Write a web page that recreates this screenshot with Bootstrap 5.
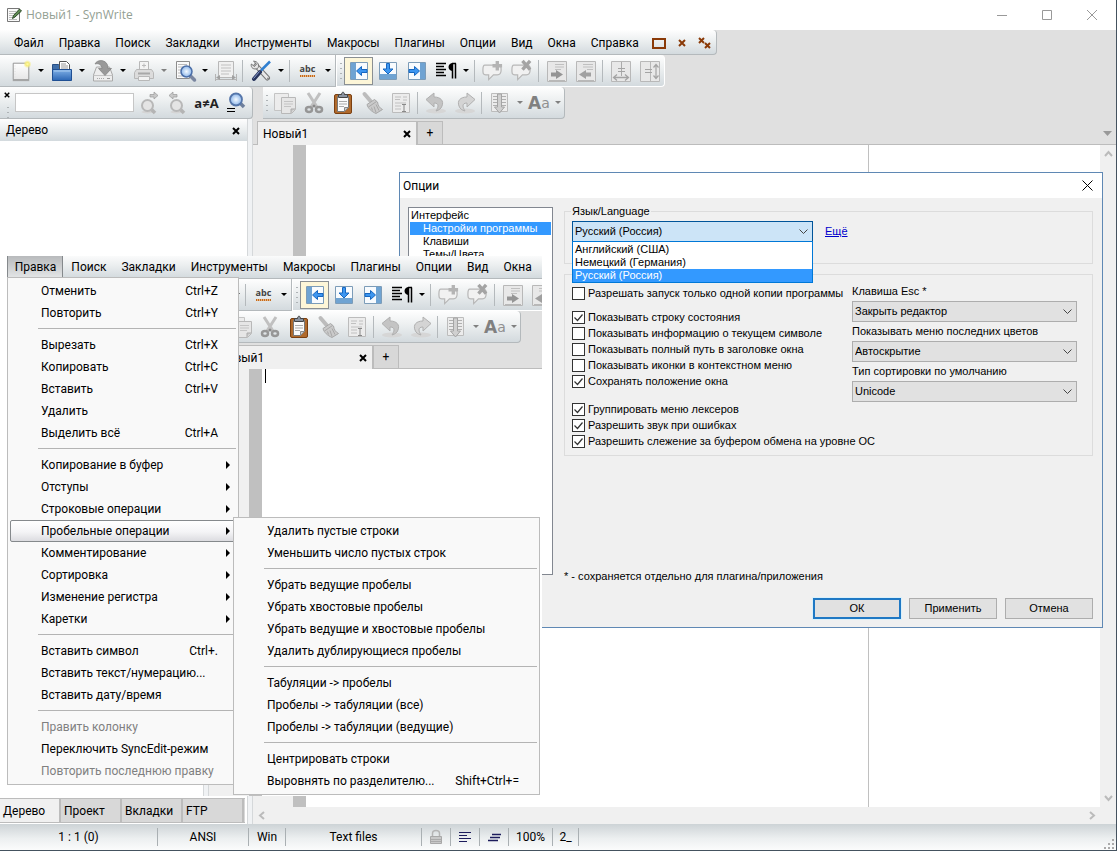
<!DOCTYPE html>
<html lang="ru">
<head>
<meta charset="utf-8">
<meta name="viewport" content="width=device-width, initial-scale=1">
<title>Новый1 - SynWrite</title>
<link href="https://cdn.jsdelivr.net/npm/bootstrap@5.3.0/dist/css/bootstrap.min.css" rel="stylesheet">
<style>
  :root {
    --ui: Roboto, "Noto Sans", sans-serif;
    --dlg: "Liberation Sans", Arial, sans-serif;
    --bar: linear-gradient(#fefefe, #eceff0 45%, #d3dade);
    --edge: #b4b9bc;
  }
  body { font: 12px/16px var(--ui); color: #000; background: #fff; overflow: hidden; }
  button, input, select { font: inherit; color: inherit; }
  button { border: 0; background: none; padding: 0; }
  .app { min-height: 100vh; border-right: 1px solid #44525f; border-bottom: 1px solid #44525f; }
  .titlebar { height: 30px; padding: 0 2px 0 6px; color: #93a093; }
  .titlebar span { font-family: "Open Sans", sans-serif; }
  .titlebar button { width: 45px; height: 28px; }
  .work { background: #e0e0e0; }

  .menubar { height: 25px; width: 717px; padding-left: 6px; }
  .barbox { background: var(--bar); border-right: 1px solid var(--edge); border-bottom: 1px solid var(--edge); border-radius: 0 4px 4px 0; }
  .menubar button { height: 22px; padding: 0 6px 0 7px; border: 1px solid transparent; border-bottom: 0; }
  .menubar .mdi { padding: 0 5px; color: #8a3a08; }
  .toolrow { height: 32px; }
  .tools-main { width: 336px; padding-left: 6px; border-radius: 0; }
  .tb { width: 29px; height: 28px; display: flex; align-items: center; justify-content: center; flex: none; }
  .tb svg, .titlebar svg { display: block; }
  .tb.on { border: 1px solid #8a8f93; background: #fdf6d8; }
  .dd { width: 12px; height: 28px; flex: none; display: flex; align-items: center; justify-content: center; }
  .dd::before { content: ""; border: 3px solid transparent; border-top-color: #000; border-bottom: 0; }
  .dd.off::before { border-top-color: #808080; }
  .vs { width: 6px; height: 22px; flex: none; background: linear-gradient(#b4b9bc, #b4b9bc) 2px 0 / 1px 100% no-repeat; }
  .grip { width: 7px; height: 20px; flex: none; background: radial-gradient(circle, #aeb3b6 1px, transparent 1px) 0 0 / 4px 5px repeat-y; background-position: 2px 0; }
  .findbar { width: 253px; margin-right: 10px; }
  .findbar .shut { width: 14px; height: 28px; }
  .findbar input { width: 119px; height: 19px; border: 1px solid #c6c6c6; background: #fff; margin-left: 1px; }
  .abc { font: 700 9px/10px "Open Sans", sans-serif; color: #444; }
  .abc span { padding-bottom: 3px; background: repeating-linear-gradient(90deg, #c46a1c 0 1px, #e8b888 1px 2px) 0 100% / 100% 2px no-repeat; }
  .cmp { font: 700 13px/16px "Open Sans", sans-serif; color: #222; }
  .aa { width: 26px; color: #909090; font: 14px/20px "DejaVu Sans", sans-serif; }
  .aa b { font-size: 17px; color: #808080; }

  .tree { width: 247px; background: #fff; }
  .tree-head { height: 22px; background: var(--bar); padding: 0 7px 0 6px; }
  .tree-tabs { height: 25px; border-top: 1px solid #bcbcbc; border-bottom: 1px solid #bcbcbc; background: #d8d8d8; margin: 0 2px 1px 0; }
  .tree-tabs button { width: 61px; text-align: left; padding-left: 3px; border-right: 2px solid #bcbcbc; background: #d8d8d8; }
  .tree-tabs .active { background: #f0f0f0; }
  .split { width: 6px; background: #f0f2f4; border-left: 1px solid #d5d8da; border-right: 1px solid #d5d8da; }
  .filetabs { height: 26px; padding: 2px 0 0 4px; border-bottom: 1px solid #bcbcbc; }
  .filetab { width: 161px; height: 24px; margin-bottom: -1px; padding: 0 5px; background: #f0f0f0; border: 1px solid #bcbcbc; border-bottom: 0; border-right-width: 2px; }
  .newtab { width: 25px; background: #d8d8d8; border: 1px solid #bcbcbc; border-left: 0; border-bottom: 0; }
  .page { background: #fff; }
  .gutter { width: 40px; background: #f0f0f0; }
  .fold { width: 13px; background: #c0c0c0; }
  .margin-line { width: 232px; border-left: 1px solid #c0c0c0; }
  .vscroll { width: 16px; padding: 5px 0; background: #f0f0f0; }
  .hscroll { height: 17px; padding: 0 20px 0 5px; background: #f0f0f0; }
  .cursor-mark { display: none; width: 1px; height: 14px; margin-left: 3px; background: #000; }

  .status { height: 26px; background: linear-gradient(#cdd3d6, #eceff0 55%, #fbfcfc); }
  .status span { height: 18px; border-right: 1px solid #aab0b3; display: flex; align-items: center; justify-content: center; }
  .w-pos { width: 158px; } .w-enc { width: 91px; } .w-eol { width: 37px; } .w-lex { width: 136px; }
  .w-ico { width: 29px; } .w-zoom { width: 44px; } .w-tab { width: 26px; }

  .dialog { left: 399px; right: 14px; top: 172px; background: #f0f0f0; border: 1px solid #5f88b4; font: 11px/13px var(--dlg); }
  .dialog header { height: 25px; background: #fff; padding: 0 9px 0 3px; }
  .dialog header h1 { font: 12px/16px var(--ui); margin: 0; }
  .dlg-body { padding: 9px 9px 8px 8px; }
  .topics { flex: none; width: 145px; height: 368px; background: #fff; border: 1px solid #828790; padding: 1px; margin: 0 11px 8px 0; }
  .topics li { padding-left: 1px; height: 13px; white-space: nowrap; }
  .topics .sub { padding-left: 13px; }
  .topics .sel, .options .sel { background: #3399ff; color: #fff; }
  .grp { border: 1px solid #dcdcdc; position: relative; }
  .lang { margin-top: 4px; height: 53px; padding: 9px 7px 0; }
  .lang legend { position: absolute; top: -7px; left: 6px; width: auto; padding: 0 1px; font-size: 11px; line-height: 13px; background: #f0f0f0; margin: 0; }
  .combo { appearance: none; width: 100%; height: 21px; padding: 0 2px; border: 1px solid #adadad; border-radius: 0; background: #e1e1e1 url("data:image/svg+xml,%3Csvg xmlns='http://www.w3.org/2000/svg' width='9' height='6'%3E%3Cpath d='M.5.5l4 4 4-4' fill='none' stroke='%23444'/%3E%3C/svg%3E") right 4px center no-repeat; }
  .lang-pick { width: 241px; margin-right: 12px; }
  .lang-pick .combo { background-color: #cce4f7; border-color: #005499; }
  .options { left: 0; top: 20px; width: 241px; padding-top: 1px; background: #fff; border: 1px solid #0078d7; z-index: 2; }
  .options li { padding-left: 2px; height: 13px; }
  .other { margin-top: 10px; height: 182px; padding: 7px 15px 0 7px; }
  .checks { padding-top: 3px; width: 280px; }
  .chk { height: 16px; display: flex; align-items: center; gap: 3px; white-space: nowrap; }
  .chk.apart { margin-top: 12px; }
  .chk input { appearance: none; width: 13px; height: 13px; border: 1px solid #333; background: #fff; margin: 0; flex: none; }
  .chk input:checked { background: #fff url("data:image/svg+xml,%3Csvg xmlns='http://www.w3.org/2000/svg' width='11' height='11'%3E%3Cpath d='M1.500 5.500l3 3 5-6' fill='none' stroke='%23333' stroke-width='1.200'/%3E%3C/svg%3E") center no-repeat; }
  .side { width: 225px; }
  .side label { display: block; height: 19px; line-height: 19px; }
  .side .combo { display: block; }
  .more-link { color: #00c; }
  .dlg-foot { padding-top: 15px; }
  .push { width: 88px; height: 21px; background: #e1e1e1; border: 1px solid #adadad; }
  .push.main { border: 2px solid #1f78c4; box-shadow: 0 0 0 1px #d9f0fb; }

  .snap { left: 7px; top: 256px; width: 535px; height: 540px; overflow: hidden; background: #fff; }
  .snap .work { width: 100vw; height: 600px; margin: -2px 0 0 -51px; }
  .snap .cursor-mark { display: block; }
  .snap .is-hidden-here { visibility: hidden; }
  .snap .is-open { background: linear-gradient(#b6b8ba, #e4e6e7); border-color: #85898c; border-radius: 2px 2px 0 0; height: 24px; }

  .dropdown-menu.win { --bs-dropdown-border-radius: 0; font-size: 12px; color: #000; padding: 2px; background: #f9f9f9; border: 1px solid #bcbcbc; margin: 0; min-width: 0; }
  .edit-menu { left: 7px; top: 277px; width: 232px; }
  .space-menu { left: 233px; top: 517px; width: 307px; }
  .win .dropdown-item { height: 22px; padding: 0 17px 0 30px; border: 1px solid transparent; line-height: 20px; color: #000; display: flex; justify-content: space-between; position: relative; }
  .win .dropdown-item:disabled { color: #808080; }
  .win .dropdown-divider { height: 1px; margin: 4px 0 5px 28px; border-top: 1px solid #b4b4b4; opacity: 1; }
  .win .hot { background: linear-gradient(#fff, #f4f4f6 55%, #dcdce0); border-color: #85898c; border-radius: 2px; }
  .win .more::after { content: ""; position: absolute; right: 5px; top: 6px; border: 4px solid transparent; border-left-color: #000; border-right: 0; }
</style>
</head>
<body>

<svg width="0" height="0" class="position-absolute" aria-hidden="true">
  <defs>
    <linearGradient id="gb" x2="0" y2="1"><stop stop-color="#7fb0e6"/><stop offset="1" stop-color="#2c66b4"/></linearGradient>
    <radialGradient id="gl"><stop stop-color="#f4faff"/><stop offset="1" stop-color="#8cb6ea"/></radialGradient>
    <radialGradient id="gy"><stop stop-color="#fffbb0"/><stop offset=".4" stop-color="#f6ec7a"/><stop offset="1" stop-color="#f6ec7a" stop-opacity="0"/></radialGradient>
    <linearGradient id="gp" x2="0" y2="1"><stop stop-color="#fff"/><stop offset="1" stop-color="#e6e6e6"/></linearGradient>
  </defs>
  <symbol id="i-new" viewBox="0 0 24 24"><path d="M3.500 3.500h17v18h-17z" fill="url(#gp)" stroke="#8d8d8d"/><path d="M3 22.500h18" stroke="#9a9a9a"/><path d="M5.500 6v14" stroke="#ddd" stroke-dasharray="1 2"/><circle cx="19" cy="4.500" r="4.500" fill="url(#gy)"/></symbol>
  <symbol id="i-open" viewBox="0 0 24 24"><path d="M2.500 21V5.500h6l2 2h2V21z" fill="#3f6ea8" stroke="#274f85"/><path d="M9.500 2.500h7l3 3V14h-10z" fill="#fff" stroke="#555"/><path d="M11 5h5M11 7h7M11 9h7" stroke="#999"/><path d="M2.500 21.500V10.500h19v11z" fill="url(#gb)" stroke="#1f4f93"/><path d="M4 12h16" stroke="#a9cbf0"/></symbol>
  <symbol id="i-save" viewBox="0 0 24 24"><path d="M5.500 8h13l3 8v6h-19v-6z" fill="#ededed" stroke="#a9a9a9"/><path d="M2.500 16.500h19" stroke="#c4c4c4"/><path d="M6 19.500h8" stroke="#aaa" stroke-dasharray="1 1"/><path d="M16 19.500h3" stroke="#999"/><path d="M4 5c2-5 12-5 13 3v1.500h3.500L14 16.500 7.500 9.500H11C11 5.500 7 4 4 5z" fill="#999" stroke="#808080" stroke-width=".7"/></symbol>
  <symbol id="i-print" viewBox="0 0 24 24"><path d="M7.500 11V2.500h9V11" fill="#f4f4f4" stroke="#b8b8b8"/><path d="M10 6.500h4M12 4.500v4" stroke="#bbb"/><path d="M4.500 10.500h15l2 3v6h-19v-6z" fill="#dcdcdc" stroke="#b8b8b8"/><path d="M6 14.500h12" stroke="#a8a8a8" stroke-width="2"/><path d="M6.500 17.500h11v4h-11z" fill="#f2f2f2" stroke="#b8b8b8"/></symbol>
  <symbol id="i-preview" viewBox="0 0 24 24"><path d="M3.500 2.500h13v17h-13z" fill="#fafafa" stroke="#8d8d8d"/><path d="M5 5.500h9M5 8h5M5 11h3M5 14h3M5 17h6" stroke="#bbb"/><path d="M17.500 17l4 4" stroke="#7a86a0" stroke-width="3.500" stroke-linecap="round"/><circle cx="13.500" cy="12.500" r="5.500" fill="url(#gl)" stroke="#4a6ea8" stroke-width="1.500"/></symbol>
  <symbol id="i-fit" viewBox="0 0 24 24"><path d="M4.500 2.500h15v16h-15z" fill="#f0f0f0" stroke="#b8b8b8"/><path d="M7 6h10M7 9h10M7 12h10M7 15h8" stroke="#c0c0c0"/><path d="M1.500 15v7M22.500 15v7M2 20.500h20" stroke="#b4b4b4"/><path d="M2 18.500l4-2.500v5zM22 18.500l-4-2.500v5z" fill="#a0a0a0"/></symbol>
  <symbol id="i-tools" viewBox="0 0 24 24"><path d="M7 6.500L18.500 19" stroke="#777" stroke-width="5" stroke-linecap="round"/><path d="M7 6.500L18.500 19" stroke="#e8e8e8" stroke-width="3" stroke-linecap="round"/><path d="M4.500 2.200L7.500 5 5.500 7.500 2.300 5C1.500 9 5 11 8.500 9.500 11 7 9 2 4.500 2.200z" fill="#e4e4e4" stroke="#777"/><circle cx="19" cy="19.500" r="1" fill="#888"/><path d="M21 2.500L12 11.500" stroke="#2f7fd0" stroke-width="2.500"/><path d="M11 13l-6 7" stroke="#27345c" stroke-width="4" stroke-linecap="round"/><path d="M10.500 12.500l-6 7" stroke="#8c9ed0"/></symbol>
  <symbol id="i-left" viewBox="0 0 20 20"><path d="M1.500 1.500h17v17h-17z" fill="#f8fbfe" stroke="#7c9cb8"/><path d="M2 2h5v16H2z" fill="#6fa3d2"/><path d="M7.500 10l5-4.500V8.500H18v3h-5.500v3z" fill="#3d96f0" stroke="#1767c0"/></symbol>
  <symbol id="i-down" viewBox="0 0 20 20"><path d="M1.500 1.500h17v17h-17z" fill="#f8fbfe" stroke="#7c9cb8"/><path d="M2 13h16v5H2z" fill="#6fa3d2"/><path d="M10 13L5 8h3.500V2.500h3V8H15z" fill="#3d96f0" stroke="#1767c0"/></symbol>
  <symbol id="i-right" viewBox="0 0 20 20"><path d="M1.500 1.500h17v17h-17z" fill="#f8fbfe" stroke="#7c9cb8"/><path d="M13 2h5v16h-5z" fill="#6fa3d2"/><path d="M12.500 10l-5-4.500V8.500H2v3h5.500v3z" fill="#3d96f0" stroke="#1767c0"/></symbol>
  <symbol id="i-para" viewBox="0 0 22 20"><path d="M1 2.500h10M1 5.500h8M1 8.500h10M1 11.500h8M1 14.500h10" stroke="#000" stroke-width="1.300"/><path d="M17 2.500h4M17.500 2.500v15M20.500 2.500v15" stroke="#000" stroke-width="1.500"/><path d="M18 2c-6 0-6 8 0 8z"/></symbol>
  <symbol id="i-note" viewBox="0 0 24 24"><path d="M4 6.500h14c3 0 3 2 3 5s-1 5-4 5h-4l-5 5v-5H5c-3 0-3-2-3-5s0-5 2-5z" fill="#f1f1f1" stroke="#b8b8b8" stroke-width="1.300"/></symbol>
  <symbol id="i-noteadd" viewBox="0 0 24 24"><use href="#i-note"/><path d="M17 2v10M12 7h10" stroke="#b4b4b4" stroke-width="3.500"/></symbol>
  <symbol id="i-notedel" viewBox="0 0 24 24"><use href="#i-note"/><path d="M13 2l8 9M21 2l-8 9" stroke="#a4a4a4" stroke-width="3.500"/></symbol>
  <symbol id="i-box" viewBox="0 0 24 24"><path d="M2.500 2.500h19v20h-19z" fill="#e8e8e8" stroke="#b8b8b8"/></symbol>
  <symbol id="i-indent" viewBox="0 0 24 24"><use href="#i-box"/><path d="M10 5.500h9M10 8h9M10 10.500h6" stroke="#c0c0c0"/><path d="M6 13.500h5V11l7 4.500-7 4.500v-2.500H6z" fill="#959595"/><path d="M4 21.500h16" stroke="#b8b8b8"/></symbol>
  <symbol id="i-outdent" viewBox="0 0 24 24"><use href="#i-box"/><path d="M9 5.500h10M9 8h10M13 10.500h6" stroke="#c0c0c0"/><path d="M17 13.500h-5V11l-7 4.500 7 4.500v-2.500h5z" fill="#a0a0a0"/><path d="M4 21.500h16" stroke="#b8b8b8"/></symbol>
  <symbol id="i-synch" viewBox="0 0 24 24"><use href="#i-box"/><path d="M12.500 3v14" stroke="#aaa"/><path d="M9 9.500h7M9 12.500h7" stroke="#a4a4a4" stroke-width="1.200"/><path d="M5 18.500h14M8 15.500l-3.500 3L8 21.500M16 15.500l3.500 3-3.500 3" fill="none" stroke="#a4a4a4" stroke-width="1.300"/></symbol>
  <symbol id="i-syncv" viewBox="0 0 24 24"><use href="#i-box"/><path d="M12.500 3v19" stroke="#b8b8b8"/><path d="M7 10.500h7M7 13.500h7" stroke="#a4a4a4" stroke-width="1.200"/><path d="M18 6v13M15.500 8.500L18 5.500l2.500 3M15.500 16.500l2.500 3 2.500-3" fill="none" stroke="#a4a4a4" stroke-width="1.200"/></symbol>
  <symbol id="i-find" viewBox="0 0 20 24"><ellipse cx="8.500" cy="21" rx="6" ry="1.500" fill="#d4d4d4"/><path d="M12 18l4 4" stroke="#b4b4b4" stroke-width="3.500"/><circle cx="8.500" cy="14.500" r="5.500" fill="#e4e4e4" stroke="#b8b8b8" stroke-width="2"/></symbol>
  <symbol id="i-next" viewBox="0 0 20 24"><use href="#i-find"/><path d="M11 3.500h4V1l4 3.500-4 3.500V6h-4z" fill="#c8c8c8" stroke="#999" stroke-width=".7"/></symbol>
  <symbol id="i-prev" viewBox="0 0 20 24"><use href="#i-find"/><path d="M9 3.500H5V1L1 4.500 5 8V6h4z" fill="#c8c8c8" stroke="#999" stroke-width=".7"/></symbol>
  <symbol id="i-findall" viewBox="0 0 20 24"><path d="M14 12l4 4" stroke="#6e7f9c" stroke-width="3.500"/><circle cx="10" cy="8.500" r="6" fill="url(#gl)" stroke="#5576aa" stroke-width="1.800"/><path d="M1 17.500h8M1 20.500h8" stroke="#000" stroke-width="1.200"/></symbol>
  <symbol id="i-copy" viewBox="0 0 24 24"><path d="M1.500 2.500h14v17h-14z" fill="#ececec" stroke="#c4c4c4"/><path d="M8.500 6.500h14v12l-4 4h-10z" fill="#e6e6e6" stroke="#b8b8b8"/><path d="M11 10.500h9M11 13h9M11 15.500h7" stroke="#c4c4c4"/><path d="M22 18h-4v4" fill="#ccc" stroke="#aaa"/></symbol>
  <symbol id="i-cut" viewBox="0 0 24 24"><path d="M6 2l9 14M18 2L9 16" stroke="#c0c0c0" stroke-width="3"/><ellipse cx="7" cy="18.500" rx="3" ry="2.500" fill="none" stroke="#969696" stroke-width="2.500"/><ellipse cx="17" cy="18.500" rx="3" ry="2.500" fill="none" stroke="#969696" stroke-width="2.500"/><circle cx="12" cy="15" r="1.500" fill="#8a8a8a"/></symbol>
  <symbol id="i-paste" viewBox="0 0 24 24"><rect x="3.500" y="3.500" width="17" height="19" rx="1.500" fill="#b06a2c" stroke="#7a3f10"/><path d="M6.500 5.500h11v11l-4 4h-7z" fill="#fbfbfb" stroke="#777"/><path d="M8 10.500h8M8 13h8M8 15.500h5" stroke="#aaa"/><path d="M17.500 16.500h-4v4z" fill="#ccc" stroke="#888"/><path d="M7.500 6.500v-3h3c0-3 3-3 3 0h3v3z" fill="#8a93a0" stroke="#444"/></symbol>
  <symbol id="i-brush" viewBox="0 0 24 24"><path d="M4.500 3l6 7" stroke="#bcbcbc" stroke-width="4" stroke-linecap="round"/><path d="M7 13.500l7.500-5 3 2.500c.5 3.500 2 6 5 7.500l-6.500 4C11.500 20.500 8 17.500 7 13.500z" fill="#cacaca" stroke="#a8a8a8"/><path d="M8.500 16l8-5.500M12.500 19.500l-1-3M16 21.500l-2-6M19 19.500l-3-6" stroke="#a8a8a8"/></symbol>
  <symbol id="i-sel" viewBox="0 0 24 24"><path d="M3.500 2.500h17v19h-17z" fill="#ececec" stroke="#bcbcbc"/><path d="M6 6h6M6 8.500h5M14 6h4M14 9h4M6 12h11M6 15h6M6 18h6" stroke="#c0c0c0" stroke-width="1.200"/><path d="M13 13.500h4M15 13.500v7M13 20.500h4" stroke="#888"/></symbol>
  <symbol id="i-undo" viewBox="0 0 24 24"><ellipse cx="12" cy="20" rx="10" ry="2.500" fill="#d6d6d6"/><path d="M2 8.500L10 2v4c7 0 10 4 8 9-1 3-3 4-6 5 2-3 4-8-2-8v4z" fill="#c4c4c4" stroke="#b0b0b0"/></symbol>
  <symbol id="i-redo" viewBox="0 0 24 24"><ellipse cx="12" cy="20" rx="10" ry="2.500" fill="#d6d6d6"/><path d="M22 8.500L14 2v4c-7 0-10 4-8 9 1 3 3 4 6 5-2-3-4-8 2-8v4z" fill="#d4d4d4" stroke="#b0b0b0"/></symbol>
  <symbol id="i-sort" viewBox="0 0 24 24"><path d="M3.500 2.500h16v18h-16z" fill="#ececec" stroke="#bcbcbc"/><path d="M5 5.500h4M5 8.500h4M5 11.500h4M5 14.500h4M14 5.500h4M14 8.500h4M14 11.500h4M14 14.500h4" stroke="#b0b0b0"/><path d="M9.500 3h4v13h3L11.500 22l-5-6h3z" fill="#d0d0d0" stroke="#a4a4a4"/></symbol>
  <symbol id="i-x" viewBox="0 0 8 8"><path d="M1 1l6 6M7 1L1 7" stroke="currentColor" stroke-width="2"/></symbol>
</svg>

<div class="app d-flex flex-column">
  <header class="titlebar d-flex align-items-center">
    <svg width="16" height="16" viewBox="0 0 16 16" class="me-1"><path d="M1.500 1.500h12v13h-12z" fill="#fafafa" stroke="#777"/><path d="M3 4.500h7M3 6.500h6M3 8.500h5M3 10.500h4M3 12.500h8" stroke="#bbb"/><path d="M6.500 11.500l1-3 6-6.500 2 2-6.500 6z" fill="#5f8a52" stroke="#2c4a28"/></svg>
    <span class="flex-grow-1">Новый1 - SynWrite</span>
    <button aria-label="Свернуть"><svg class="mx-auto" width="10" height="10"><path d="M0 5.500h10" stroke="#999"/></svg></button>
    <button aria-label="Развернуть"><svg class="mx-auto" width="10" height="10"><path d="M.5.5h9v9h-9z" fill="none" stroke="#999"/></svg></button>
    <button aria-label="Закрыть"><svg class="mx-auto" width="10" height="10"><path d="M0 0l10 10M10 0L0 10" stroke="#999"/></svg></button>
  </header>

  <div class="work d-flex flex-column flex-grow-1">
    <nav class="menubar barbox d-flex align-items-center">
      <button class="is-hidden-here">Файл</button><button class="edit-entry">Правка</button><button>Поиск</button><button>Закладки</button><button>Инструменты</button><button>Макросы</button><button>Плагины</button><button>Опции</button><button>Вид</button><button>Окна</button><button class="is-hidden-here">Справка</button>
      <button class="mdi" aria-label="Окно"><svg width="14" height="11"><path d="M1 1h12v9H1z" fill="none" stroke="currentColor" stroke-width="2"/></svg></button>
      <button class="mdi" aria-label="Закрыть окно"><svg width="8" height="8"><use href="#i-x"/></svg></button>
      <button class="mdi" aria-label="Закрыть все"><svg width="13" height="12" viewBox="0 0 13 12"><path d="M1 1l5 5M6 1L1 6M7 6l5 5M12 6l-5 5" stroke="currentColor" stroke-width="2"/></svg></button>
    </nav>

    <div class="toolrow d-flex">
      <div class="tools-main barbox d-flex align-items-center">
        <button class="tb" aria-label="Новый"><svg width="22" height="22"><use href="#i-new"/></svg></button><button class="dd" aria-label="Новый, список"></button>
        <button class="tb" aria-label="Открыть"><svg width="24" height="24"><use href="#i-open"/></svg></button><button class="dd" aria-label="Открыть, список"></button>
        <button class="tb" aria-label="Сохранить"><svg width="24" height="24"><use href="#i-save"/></svg></button><button class="dd" aria-label="Сохранить, список"></button>
        <button class="tb" aria-label="Печать"><svg width="24" height="24"><use href="#i-print"/></svg></button><button class="dd off" aria-label="Печать, список"></button>
        <button class="tb" aria-label="Просмотр"><svg width="24" height="24"><use href="#i-preview"/></svg></button><button class="dd" aria-label="Просмотр, список"></button>
        <button class="tb" aria-label="Перенос"><svg width="24" height="24"><use href="#i-fit"/></svg></button><span class="vs"></span>
        <button class="tb" aria-label="Инструменты"><svg width="24" height="24"><use href="#i-tools"/></svg></button><button class="dd" aria-label="Инструменты, список"></button><span class="vs"></span>
        <button class="tb abc"><span>abc</span></button><button class="dd" aria-label="Орфография, список"></button>
      </div>
      <div class="barbox d-flex align-items-center ps-0 border-start border-white">
        <span class="grip"></span>
        <button class="tb on" aria-label="Панель слева"><svg width="20" height="20"><use href="#i-left"/></svg></button>
        <button class="tb" aria-label="Панель снизу"><svg width="20" height="20"><use href="#i-down"/></svg></button>
        <button class="tb" aria-label="Панель справа"><svg width="20" height="20"><use href="#i-right"/></svg></button>
        <button class="tb" aria-label="Непечатаемые"><svg width="22" height="20"><use href="#i-para"/></svg></button><button class="dd" aria-label="Непечатаемые, список"></button><span class="vs"></span>
        <button class="tb" aria-label="Комментировать"><svg width="23" height="23"><use href="#i-noteadd"/></svg></button>
        <button class="tb" aria-label="Раскомментировать"><svg width="23" height="23"><use href="#i-notedel"/></svg></button><span class="vs"></span>
        <button class="tb" aria-label="Отступ"><svg width="24" height="24"><use href="#i-indent"/></svg></button>
        <button class="tb" aria-label="Убрать отступ"><svg width="24" height="24"><use href="#i-outdent"/></svg></button><span class="vs"></span>
        <button class="tb" aria-label="Прокрутка по горизонтали"><svg width="24" height="24"><use href="#i-synch"/></svg></button>
        <button class="tb" aria-label="Прокрутка по вертикали"><svg width="24" height="24"><use href="#i-syncv"/></svg></button>
      </div>
    </div>

    <div class="toolrow d-flex">
      <div class="findbar barbox d-flex align-items-center is-hidden-here">
        <div class="shut d-flex flex-column align-items-center"><button class="lh-1" aria-label="Закрыть поиск"><svg width="6" height="6"><use href="#i-x"/></svg></button><span class="grip mt-1"></span></div>
        <input type="text" aria-label="Поиск">
        <button class="tb" aria-label="Найти далее"><svg width="20" height="24"><use href="#i-next"/></svg></button>
        <button class="tb" aria-label="Найти ранее"><svg width="20" height="24"><use href="#i-prev"/></svg></button>
        <button class="tb cmp">a≠A</button>
        <button class="tb" aria-label="Найти все"><svg width="20" height="24"><use href="#i-findall"/></svg></button>
      </div>
      <div class="barbox d-flex align-items-center">
        <span class="grip"></span>
        <button class="tb" aria-label="Копировать"><svg width="24" height="24"><use href="#i-copy"/></svg></button>
        <button class="tb" aria-label="Вырезать"><svg width="24" height="24"><use href="#i-cut"/></svg></button>
        <button class="tb" aria-label="Вставить"><svg width="24" height="24"><use href="#i-paste"/></svg></button>
        <button class="tb" aria-label="Очистить"><svg width="24" height="24"><use href="#i-brush"/></svg></button>
        <button class="tb" aria-label="Выделить всё"><svg width="24" height="24"><use href="#i-sel"/></svg></button><span class="vs"></span>
        <button class="tb" aria-label="Отменить"><svg width="24" height="24"><use href="#i-undo"/></svg></button>
        <button class="tb" aria-label="Повторить"><svg width="24" height="24"><use href="#i-redo"/></svg></button><span class="vs"></span>
        <button class="tb" aria-label="Сортировка"><svg width="24" height="24"><use href="#i-sort"/></svg></button><button class="dd off" aria-label="Сортировка, список"></button>
        <button class="tb aa"><b>A</b>a</button><button class="dd off" aria-label="Регистр, список"></button>
      </div>
    </div>

    <div class="d-flex flex-grow-1">
      <aside class="tree d-flex flex-column">
        <div class="tree-head d-flex align-items-center justify-content-between is-hidden-here"><span>Дерево</span><button class="lh-1" aria-label="Закрыть панель"><svg width="8" height="8"><use href="#i-x"/></svg></button></div>
        <div class="flex-grow-1"></div>
        <div class="tree-tabs d-flex is-hidden-here"><button class="active">Дерево</button><button>Проект</button><button>Вкладки</button><button>FTP</button></div>
      </aside>
      <div class="split"></div>
      <main class="d-flex flex-column flex-grow-1">
        <div class="filetabs d-flex">
          <div class="filetab d-flex align-items-center justify-content-between"><span>Новый1</span><button class="lh-1" aria-label="Закрыть вкладку"><svg width="8" height="8"><use href="#i-x"/></svg></button></div>
          <button class="newtab">+</button>
          <button class="ms-auto align-self-center me-1" aria-label="Список вкладок"><svg width="9" height="5"><path d="M0 0h9L4.500 5z" fill="#999"/></svg></button>
        </div>
        <div class="page d-flex flex-grow-1">
          <div class="gutter"></div><div class="fold"></div><div class="cursor-mark"></div>
          <div class="flex-grow-1"></div>
          <div class="margin-line"></div>
          <div class="vscroll d-flex flex-column align-items-center justify-content-between">
            <svg width="9" height="8"><path d="M1 6l3.500-4L8 6" fill="none" stroke="#bbb" stroke-width="2"/></svg>
            <svg width="9" height="8"><path d="M1 2l3.500 4L8 2" fill="none" stroke="#bbb" stroke-width="2"/></svg>
          </div>
        </div>
        <div class="hscroll d-flex align-items-center justify-content-between">
          <svg width="8" height="9"><path d="M6 1L2 4.500 6 8" fill="none" stroke="#bbb" stroke-width="2"/></svg>
          <svg width="8" height="9"><path d="M2 1l4 3.500L2 8" fill="none" stroke="#bbb" stroke-width="2"/></svg>
        </div>
      </main>
    </div>
  </div>

  <footer class="status d-flex align-items-center">
    <span class="w-pos">1 : 1 (0)</span><span class="w-enc">ANSI</span><span class="w-eol">Win</span><span class="w-lex">Text files</span>
    <span class="w-ico"><svg width="14" height="16"><path d="M3.500 8V4.500c0-4 7-4 7 0V8" fill="none" stroke="#b4b4b4" stroke-width="1.500"/><path d="M1.500 7.500h11v7h-11z" fill="#c8c8c8" stroke="#a8a8a8"/><path d="M2 10.500h10M2 12.500h10" stroke="#aaa"/></svg></span>
    <span class="w-ico"><svg width="12" height="12"><path d="M0 1.500h12M0 4.500h8M0 7.500h12M0 10.500h8" stroke="#1c1c5c" stroke-width="1.200"/></svg></span>
    <span class="w-ico"><svg width="13" height="10"><path d="M4 2.500h9M2 5.500h10M0 8.500h10" stroke="#1c1c5c" stroke-width="1.500"/></svg></span>
    <span class="w-zoom">100%</span><span class="w-tab">2_</span>
    <svg class="ms-auto align-self-end" width="12" height="12" fill="#aaa"><path d="M8 1h2v2H8zM4 5h2v2H4zM8 5h2v2H8zM0 9h2v2H0zM4 9h2v2H4zM8 9h2v2H8z"/></svg>
  </footer>
</div>

<section class="dialog position-absolute" role="dialog" aria-label="Опции">
  <header class="d-flex align-items-center justify-content-between">
    <h1>Опции</h1>
    <button aria-label="Закрыть"><svg class="d-block" width="11" height="11"><path d="M.5.5l10 10M10.500.5l-10 10" stroke="#000"/></svg></button>
  </header>
  <div class="dlg-body">
    <div class="d-flex">
      <ul class="topics list-unstyled"><li>Интерфейс</li><li class="sub sel">Настройки программы</li><li class="sub">Клавиши</li><li class="sub">Темы/Цвета</li></ul>
      <div class="flex-grow-1 d-flex flex-column">
        <fieldset class="grp lang">
          <legend>Язык/Language</legend>
          <div class="d-flex align-items-center">
            <div class="lang-pick position-relative">
              <select class="combo" aria-label="Язык"><option>Русский (Россия)</option></select>
              <ul class="options list-unstyled position-absolute m-0"><li>Английский (США)</li><li>Немецкий (Германия)</li><li class="sel">Русский (Россия)</li></ul>
            </div>
            <a href="#" class="more-link">Ещё</a>
          </div>
        </fieldset>
        <fieldset class="grp other d-flex justify-content-between">
          <div class="checks">
            <label class="chk"><input type="checkbox">Разрешать запуск только одной копии программы</label>
            <label class="chk mt-2"><input type="checkbox" checked>Показывать строку состояния</label>
            <label class="chk"><input type="checkbox">Показывать информацию о текущем символе</label>
            <label class="chk"><input type="checkbox">Показывать полный путь в заголовке окна</label>
            <label class="chk"><input type="checkbox">Показывать иконки в контекстном меню</label>
            <label class="chk"><input type="checkbox" checked>Сохранять положение окна</label>
            <label class="chk apart"><input type="checkbox" checked>Группировать меню лексеров</label>
            <label class="chk"><input type="checkbox" checked>Разрешить звук при ошибках</label>
            <label class="chk"><input type="checkbox" checked>Разрешить слежение за буфером обмена на уровне ОС</label>
          </div>
          <div class="side">
            <label for="esc">Клавиша Esc *</label><select id="esc" class="combo"><option>Закрыть редактор</option></select>
            <label for="col">Показывать меню последних цветов</label><select id="col" class="combo"><option>Автоскрытие</option></select>
            <label for="srt">Тип сортировки по умолчанию</label><select id="srt" class="combo"><option>Unicode</option></select>
          </div>
        </fieldset>
        <div class="mt-auto">* - сохраняется отдельно для плагина/приложения</div>
      </div>
    </div>
    <div class="dlg-foot d-flex justify-content-end gap-2"><button class="push main">ОК</button><button class="push">Применить</button><button class="push">Отмена</button></div>
  </div>
</section>

<div class="snap position-absolute"></div>

<ul class="dropdown-menu show win edit-menu">
  <li><button class="dropdown-item">Отменить<span>Ctrl+Z</span></button></li>
  <li><button class="dropdown-item">Повторить<span>Ctrl+Y</span></button></li>
  <li><hr class="dropdown-divider"></li>
  <li><button class="dropdown-item">Вырезать<span>Ctrl+X</span></button></li>
  <li><button class="dropdown-item">Копировать<span>Ctrl+C</span></button></li>
  <li><button class="dropdown-item">Вставить<span>Ctrl+V</span></button></li>
  <li><button class="dropdown-item">Удалить</button></li>
  <li><button class="dropdown-item">Выделить всё<span>Ctrl+A</span></button></li>
  <li><hr class="dropdown-divider"></li>
  <li><button class="dropdown-item more">Копирование в буфер</button></li>
  <li><button class="dropdown-item more">Отступы</button></li>
  <li><button class="dropdown-item more">Строковые операции</button></li>
  <li><button class="dropdown-item more hot">Пробельные операции</button></li>
  <li><button class="dropdown-item more">Комментирование</button></li>
  <li><button class="dropdown-item more">Сортировка</button></li>
  <li><button class="dropdown-item more">Изменение регистра</button></li>
  <li><button class="dropdown-item more">Каретки</button></li>
  <li><hr class="dropdown-divider"></li>
  <li><button class="dropdown-item">Вставить символ<span>Ctrl+.</span></button></li>
  <li><button class="dropdown-item">Вставить текст/нумерацию...</button></li>
  <li><button class="dropdown-item">Вставить дату/время</button></li>
  <li><hr class="dropdown-divider"></li>
  <li><button class="dropdown-item" disabled>Править колонку</button></li>
  <li><button class="dropdown-item">Переключить SyncEdit-режим</button></li>
  <li><button class="dropdown-item" disabled>Повторить последнюю правку</button></li>
</ul>

<ul class="dropdown-menu show win space-menu">
  <li><button class="dropdown-item">Удалить пустые строки</button></li>
  <li><button class="dropdown-item">Уменьшить число пустых строк</button></li>
  <li><hr class="dropdown-divider"></li>
  <li><button class="dropdown-item">Убрать ведущие пробелы</button></li>
  <li><button class="dropdown-item">Убрать хвостовые пробелы</button></li>
  <li><button class="dropdown-item">Убрать ведущие и хвостовые пробелы</button></li>
  <li><button class="dropdown-item">Удалить дублирующиеся пробелы</button></li>
  <li><hr class="dropdown-divider"></li>
  <li><button class="dropdown-item">Табуляции -&gt; пробелы</button></li>
  <li><button class="dropdown-item">Пробелы -&gt; табуляции (все)</button></li>
  <li><button class="dropdown-item">Пробелы -&gt; табуляции (ведущие)</button></li>
  <li><hr class="dropdown-divider"></li>
  <li><button class="dropdown-item">Центрировать строки</button></li>
  <li><button class="dropdown-item">Выровнять по разделителю...<span>Shift+Ctrl+=</span></button></li>
</ul>

<script src="https://cdn.jsdelivr.net/npm/bootstrap@5.3.0/dist/js/bootstrap.bundle.min.js"></script>
<script>
  // The second editor view is the same workspace with its Edit menu open.
  const copy = document.querySelector('.work').cloneNode(true);
  copy.querySelector('.edit-entry').classList.add('is-open');
  document.querySelector('.snap').append(copy);
</script>
</body>
</html>
